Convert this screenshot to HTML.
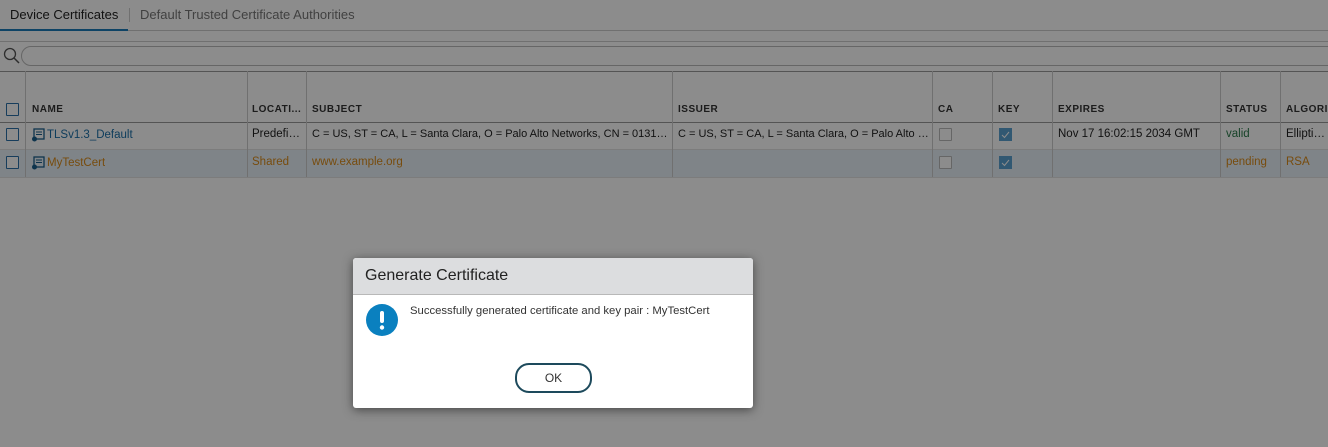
<!DOCTYPE html><html><head><style>
body{margin:0;width:1328px;height:447px;overflow:hidden;background:#fff;font-family:"Liberation Sans",sans-serif;position:relative}
.a{position:absolute}
.t{font-size:11.5px;white-space:nowrap;overflow:hidden;text-overflow:ellipsis}
.cb{position:absolute;width:11px;height:11px;border:1px solid #2a6fa8;border-radius:1px;background:#fff}
.vl{position:absolute;width:1px;background:#ccc}
.h{font-size:10px;font-weight:bold;color:#333;letter-spacing:.5px}
</style></head><body>
<div class="a t" style="left:10px;top:7px;font-size:13px;color:#222">Device Certificates</div>
<div class="a" style="left:129px;top:8px;width:1px;height:14px;background:#ccc"></div>
<div class="a t" style="left:140px;top:7px;font-size:13px;color:#777">Default Trusted Certificate Authorities</div>
<div class="a" style="left:0;top:30px;width:1328px;height:1px;background:#ccc"></div>
<div class="a" style="left:0;top:29px;width:128px;height:2px;background:#1b7ab8"></div>
<div class="a" style="left:0;top:41px;width:1328px;height:1px;background:#ccc"></div>
<svg class="a" style="left:2px;top:47px" width="18" height="18"><circle cx="8" cy="7" r="5.5" fill="none" stroke="#555" stroke-width="1.3"/><line x1="12" y1="11" x2="17" y2="16" stroke="#555" stroke-width="1.5"/></svg>
<div class="a" style="left:21px;top:46px;width:1320px;height:18px;border:1px solid #bbb;border-radius:10px"></div>
<div class="a" style="left:0;top:71px;width:1328px;height:1px;background:#999"></div>
<div class="a" style="left:0;top:122px;width:1328px;height:1px;background:#999"></div>
<div class="a" style="left:0;top:149px;width:1328px;height:28px;background:#e8f1f7"></div>
<div class="a" style="left:0;top:149px;width:1328px;height:1px;background:#e2e2e2"></div>
<div class="a" style="left:0;top:177px;width:1328px;height:1px;background:#e2e2e2"></div>
<div class="vl" style="left:25px;top:71px;height:106px"></div>
<div class="vl" style="left:247px;top:71px;height:106px"></div>
<div class="vl" style="left:306px;top:71px;height:106px"></div>
<div class="vl" style="left:672px;top:71px;height:106px"></div>
<div class="vl" style="left:932px;top:71px;height:106px"></div>
<div class="vl" style="left:992px;top:71px;height:106px"></div>
<div class="vl" style="left:1052px;top:71px;height:106px"></div>
<div class="vl" style="left:1220px;top:71px;height:106px"></div>
<div class="vl" style="left:1280px;top:71px;height:106px"></div>
<div class="cb" style="left:6px;top:103px"></div>
<div class="a h" style="left:32px;top:104px">NAME</div>
<div class="a h" style="left:252px;top:104px">LOCATI...</div>
<div class="a h" style="left:312px;top:104px">SUBJECT</div>
<div class="a h" style="left:678px;top:104px">ISSUER</div>
<div class="a h" style="left:938px;top:104px">CA</div>
<div class="a h" style="left:998px;top:104px">KEY</div>
<div class="a h" style="left:1058px;top:104px">EXPIRES</div>
<div class="a h" style="left:1226px;top:104px">STATUS</div>
<div class="a h" style="left:1286px;top:104px">ALGORI...</div>
<div class="cb" style="left:6px;top:128px"></div>
<div class="cb" style="left:6px;top:156px"></div>
<svg class="a" style="left:31px;top:128px" width="14" height="16"><rect x="3" y="1" width="10" height="10" fill="none" stroke="#1b5f8c" stroke-width="1.3"/><line x1="5" y1="4" x2="11" y2="4" stroke="#1b5f8c"/><line x1="5" y1="6.5" x2="11" y2="6.5" stroke="#1b5f8c"/><circle cx="3.5" cy="11" r="2.5" fill="#1b5f8c"/></svg>
<svg class="a" style="left:31px;top:156px" width="14" height="16"><rect x="3" y="1" width="10" height="10" fill="none" stroke="#1b5f8c" stroke-width="1.3"/><line x1="5" y1="4" x2="11" y2="4" stroke="#1b5f8c"/><line x1="5" y1="6.5" x2="11" y2="6.5" stroke="#1b5f8c"/><circle cx="3.5" cy="11" r="2.5" fill="#1b5f8c"/></svg>
<div class="a t" style="left:47px;top:129px;color:#1b6fa8">TLSv1.3_Default</div>
<div class="a t" style="left:252px;top:128px;width:52px;color:#222">Predefin...</div>
<div class="a t" style="left:312px;top:128px;width:358px;color:#222;font-size:11px">C = US, ST = CA, L = Santa Clara, O = Palo Alto Networks, CN = 013101...</div>
<div class="a t" style="left:678px;top:128px;width:252px;color:#222;font-size:11px">C = US, ST = CA, L = Santa Clara, O = Palo Alto Ne...</div>
<div class="cb" style="left:939px;top:128px;border-color:#bbb"></div>
<svg class="a" style="left:999px;top:128px" width="13" height="13"><rect width="13" height="13" fill="#5aa0cf"/><path d="M3 7l2.5 2.5L10 4" stroke="#fff" fill="none" stroke-width="1"/></svg>
<div class="a t" style="left:1058px;top:128px;color:#222">Nov 17 16:02:15 2034 GMT</div>
<div class="a t" style="left:1226px;top:128px;color:#2a7a4a">valid</div>
<div class="a t" style="left:1286px;top:128px;width:42px;color:#222">Elliptic ...</div>
<div class="a t" style="left:47px;top:157px;color:#d98a1a">MyTestCert</div>
<div class="a t" style="left:252px;top:156px;color:#d98a1a">Shared</div>
<div class="a t" style="left:312px;top:156px;color:#d98a1a">www.example.org</div>
<div class="cb" style="left:939px;top:156px;border-color:#bbb"></div>
<svg class="a" style="left:999px;top:156px" width="13" height="13"><rect width="13" height="13" fill="#5aa0cf"/><path d="M3 7l2.5 2.5L10 4" stroke="#fff" fill="none" stroke-width="1"/></svg>
<div class="a t" style="left:1226px;top:156px;color:#d98a1a">pending</div>
<div class="a t" style="left:1286px;top:156px;color:#d98a1a">RSA</div>
<div class="a" style="left:0;top:0;width:1328px;height:447px;background:rgba(0,0,0,0.45)"></div>
<div class="a" style="left:353px;top:258px;width:400px;height:150px;background:#fff;border-radius:3px;box-shadow:0 2px 10px rgba(0,0,0,.5);overflow:hidden">
<div style="height:36px;background:#dcdddf;border-bottom:1px solid #b8b8b8;font-size:16px;color:#222;line-height:36px;padding-left:12px">Generate Certificate</div>
<svg class="a" style="left:13px;top:46px" width="32" height="32"><circle cx="16" cy="16" r="16" fill="#0a80bf"/><rect x="14" y="7" width="4" height="12" rx="2" fill="#fff"/><circle cx="16" cy="23.5" r="2.2" fill="#fff"/></svg>
<div class="a t" style="left:57px;top:47px;color:#333;font-size:11.3px">Successfully generated certificate and key pair : MyTestCert</div>
<div class="a" style="left:162px;top:105px;width:73px;height:26px;border:2px solid #1d4a5c;border-radius:14px;text-align:center;line-height:26px;font-size:12px;color:#333">OK</div>
</div>
</body></html>
